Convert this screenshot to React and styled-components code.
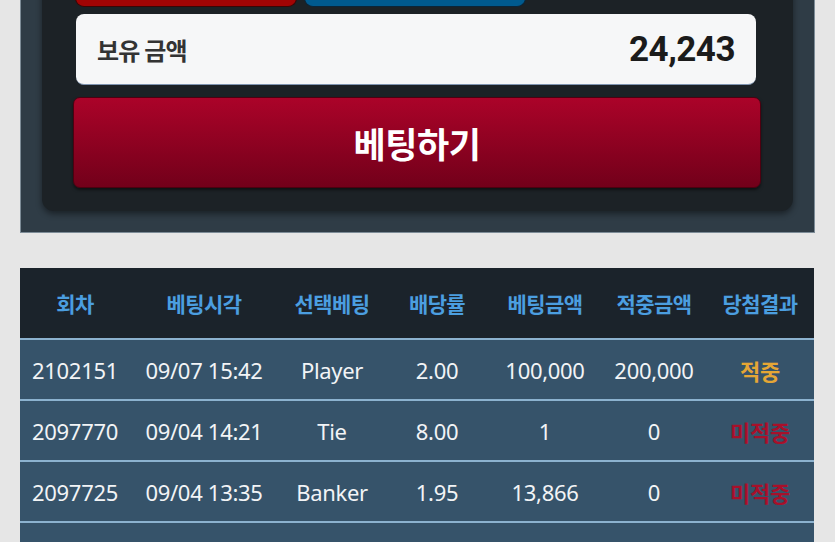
import React from "react";
import styled, { createGlobalStyle } from "styled-components";

const Global = createGlobalStyle`
  html, body { margin: 0; padding: 0; background: #e6e6e6; }
  body { font-family: "Noto Sans", "Noto Sans CJK KR", sans-serif; overflow: hidden; }
  * { box-sizing: border-box; }
`;

const Page = styled.div`
  width: 835px;
  height: 542px;
  overflow: hidden;
  padding: 0 20px;
`;

const Shift = styled.div`
  margin-top: -50px;
`;

const Panel = styled.section`
  background: #2f3c46;
  border: 1px solid #7d8c97;
  border-top: none;
  padding: 0 21px 21px 21px;
`;

const Card = styled.div`
  background: #1c2226;
  border-radius: 0 0 12px 12px;
  box-shadow: 0 3px 6px rgba(0, 0, 0, 0.45);
  padding: 0 32px 23px 31px;
  display: flex;
  flex-direction: column;
`;

const ChoiceRow = styled.div`
  display: flex;
  gap: 7px;
  margin-left: 2px;
  height: 57px;
`;

const Choice = styled.div`
  width: 222px;
  height: 57px;
  border-radius: 0 0 9px 9px;
  background: ${p => (p.$blue ? "#005a8e" : "#a10404")};
  border: 1px solid ${p => (p.$blue ? "#0b2538" : "#3a0606")};
  border-top: none;
`;

const Balance = styled.div`
  margin: 7px 5px 0 3px;
  height: 71px;
  background: #f6f7f8;
  border-radius: 8px;
  border-bottom: 1px solid #7f94b0;
  display: flex;
  align-items: center;
  justify-content: space-between;
  padding: 0 21px 0 21px;
`;

const BalanceLabel = styled.span`
  font-family: "Noto Sans CJK KR", sans-serif;
  font-weight: 700;
  font-size: 24px;
  color: #333;
  letter-spacing: -0.8px;
`;

const BalanceValue = styled.span`
  font-family: Roboto, "Noto Sans", sans-serif;
  font-weight: 700;
  font-size: 35px;
  color: #1b1b1b;
  letter-spacing: -0.5px;
`;

const BetButton = styled.button`
  margin-top: 12px;
  height: 91px;
  width: 100%;
  border: 1px solid #4d0010;
  border-radius: 7px;
  background: linear-gradient(#ab0329, #72001a);
  box-shadow: 0 2px 3px rgba(0, 0, 0, 0.5);
  color: #fff;
  font-family: "Noto Sans CJK KR", sans-serif;
  font-weight: 700;
  font-size: 35px;
  letter-spacing: -0.5px;
  padding: 0;
  cursor: pointer;
`;

const Table = styled.div`
  margin-top: 35px;
  width: 794px;
`;

const cols = "110px 148px 108px 102px 114px 104px 1fr";

const HeadRow = styled.div`
  display: grid;
  grid-template-columns: ${cols};
  height: 72px;
  align-items: center;
  background: #1b232b;
  border-bottom: 2px solid #8cb2cf;
`;

const HeadCell = styled.div`
  text-align: center;
  font-family: "Noto Sans CJK KR", sans-serif;
  font-weight: 700;
  font-size: 21px;
  color: #4b9ee0;
  letter-spacing: -0.6px;
  white-space: nowrap;
`;

const Row = styled.div`
  display: grid;
  grid-template-columns: ${cols};
  height: 61px;
  align-items: center;
  background: #36536a;
  border-bottom: 2px solid #8cb2cf;
`;

const Cell = styled.div`
  text-align: center;
  font-family: "Noto Sans", "Noto Sans CJK KR", sans-serif;
  font-size: 22px;
  letter-spacing: -0.3px;
  color: ${p => p.$color || "#f2f4f6"};
  font-weight: ${p => (p.$result ? 700 : 400)};
  white-space: nowrap;
`;

const heads = ["회차", "베팅시각", "선택베팅", "배당률", "베팅금액", "적중금액", "당첨결과"];

const rows = [
  ["2102151", "09/07 15:42", "Player", "2.00", "100,000", "200,000", "적중", "#e5a635"],
  ["2097770", "09/04 14:21", "Tie", "8.00", "1", "0", "미적중", "#a8102a"],
  ["2097725", "09/04 13:35", "Banker", "1.95", "13,866", "0", "미적중", "#a8102a"],
  ["", "", "", "", "", "", "", ""],
];

export default function App() {
  return (
    <Page>
      <Global />
      <Shift>
        <Panel>
          <Card>
            <ChoiceRow>
              <Choice />
              <Choice $blue />
            </ChoiceRow>
            <Balance>
              <BalanceLabel>보유 금액</BalanceLabel>
              <BalanceValue>24,243</BalanceValue>
            </Balance>
            <BetButton>베팅하기</BetButton>
          </Card>
        </Panel>
      </Shift>
      <Table>
        <HeadRow>
          {heads.map(h => (
            <HeadCell key={h}>{h}</HeadCell>
          ))}
        </HeadRow>
        {rows.map((r, i) => (
          <Row key={i}>
            {r.slice(0, 6).map((c, j) => (
              <Cell key={j}>{c}</Cell>
            ))}
            <Cell $result $color={r[7]}>{r[6]}</Cell>
          </Row>
        ))}
      </Table>
    </Page>
  );
}
